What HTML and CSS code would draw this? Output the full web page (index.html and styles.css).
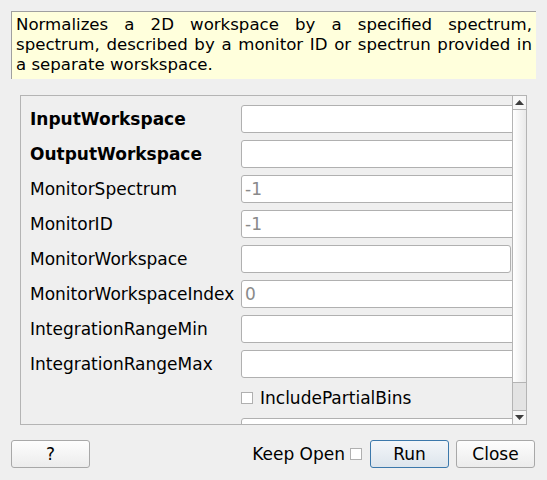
FILE: index.html
```html
<!DOCTYPE html>
<html>
<head>
<meta charset="utf-8">
<link rel="stylesheet" href="styles.css">
</head>
<body>
<div class="desc">Normalizes a 2D workspace by a specified spectrum, spectrum, described by a monitor ID or spectrun provided in a separate worskspace.</div>
<div class="panel">
  <div class="content">
    <div class="row"><span class="label bold">InputWorkspace</span><span class="field"></span></div>
    <div class="row"><span class="label bold">OutputWorkspace</span><span class="field"></span></div>
    <div class="row"><span class="label">MonitorSpectrum</span><span class="field ph">-1</span></div>
    <div class="row"><span class="label">MonitorID</span><span class="field ph">-1</span></div>
    <div class="row"><span class="label">MonitorWorkspace</span><span class="field short"></span></div>
    <div class="row"><span class="label">MonitorWorkspaceIndex</span><span class="field ph">0</span></div>
    <div class="row"><span class="label">IntegrationRangeMin</span><span class="field"></span></div>
    <div class="row"><span class="label">IntegrationRangeMax</span><span class="field"></span></div>
    <div class="row checkrow"><span class="label"></span><span class="box"></span><span class="boxlabel">IncludePartialBins</span></div>
    <div class="row"><span class="label"></span><span class="field"></span></div>
  </div>
  <div class="scrollbar">
    <div class="arrow up"><svg width="9" height="5" viewBox="0 0 9 5"><path d="M0 5 L4.5 0 L9 5 Z" fill="#3c3c3c"/></svg></div>
    <div class="track"></div>
    <div class="thumb"></div>
    <div class="arrow down"><svg width="9" height="5" viewBox="0 0 9 5"><path d="M0 0 L4.5 5 L9 0 Z" fill="#3c3c3c"/></svg></div>
  </div>
</div>
<div class="bottom">
  <button class="btn">?</button>
  <span class="spacer"></span>
  <span class="keep">Keep Open</span>
  <span class="box keepbox"></span>
  <button class="btn run">Run</button>
  <button class="btn close">Close</button>
</div>
</body>
</html>
```
FILE: styles.css
```css
html, body {
  margin: 0;
  padding: 0;
  background: #efefef;
  font-family: "DejaVu Sans", sans-serif;
  font-size: 17px;
  color: #000;
}
.desc {
  margin: 11px 11px 0 11px;
  height: 68px;
  box-sizing: border-box;
  border-top: 1px solid #a0a0a0;
  border-left: 1px solid #a0a0a0;
  background: #ffffdc;
  padding: 3px 4px 0 4px;
  text-align: justify;
  line-height: 20px;
  font-size: 16.6px;
}
.panel {
  margin: 16px 0 0 20px;
  width: 507px;
  height: 330px;
  box-sizing: border-box;
  border: 1px solid #b4b4b4;
  display: flex;
}
.content {
  flex: 1;
  overflow: hidden;
  padding: 9px 0 0 9px;
  display: flex;
  flex-direction: column;
  gap: 7px;
}
.row {
  display: flex;
  align-items: center;
  height: 28px;
  flex: none;
}
.checkrow { height: 26px; }
.label {
  width: 211px;
  flex: none;
  white-space: nowrap;
}
.bold { font-weight: bold; }
.field {
  flex: none;
  width: 290px;
  height: 28px;
  box-sizing: border-box;
  border: 1px solid #b0b0b0;
  border-radius: 3px;
  background: #fff;
  padding-left: 3px;
  line-height: 26px;
}
.field.short { width: 270px; }
.ph { color: #8a8a8a; }
.box {
  width: 12px;
  height: 12px;
  box-sizing: border-box;
  border: 1px solid #b0b0b0;
  background: #fff;
  flex: none;
}
.boxlabel { margin-left: 7px; }
.scrollbar {
  width: 14px;
  flex: none;
  box-sizing: border-box;
  border-left: 1px solid #b4b4b4;
  display: flex;
  flex-direction: column;
  background: linear-gradient(to right, #ffffff, #e9e9e9);
}
.arrow {
  height: 13px;
  flex: none;
  display: flex;
  align-items: center;
  justify-content: center;
  background: #f7f7f7;
}
.arrow.up { border-bottom: 1px solid #b4b4b4; }
.arrow.down { border-top: 1px solid #b4b4b4; }
.track { flex: 1; }
.thumb {
  height: 27px;
  flex: none;
  background: #e3e3e3;
  border-top: 1px solid #b4b4b4;
}
.bottom {
  display: flex;
  align-items: center;
  margin-top: 15px;
  padding: 0 12px 0 11px;
}
.spacer { flex: 1; }
.btn {
  width: 79px;
  height: 28px;
  box-sizing: border-box;
  border: 1px solid #a8a8a8;
  border-radius: 3px;
  background: linear-gradient(#fdfdfd, #ececec);
  font-family: "DejaVu Sans", sans-serif;
  font-size: 17px;
  color: #000;
  padding: 0;
}
.keep { margin-right: 5px; }
.run {
  margin-left: 8px;
  border-color: #3b78ab;
  background: linear-gradient(#f3f6f9, #dde5ec);
}
.close { margin-left: 7px; }
```
